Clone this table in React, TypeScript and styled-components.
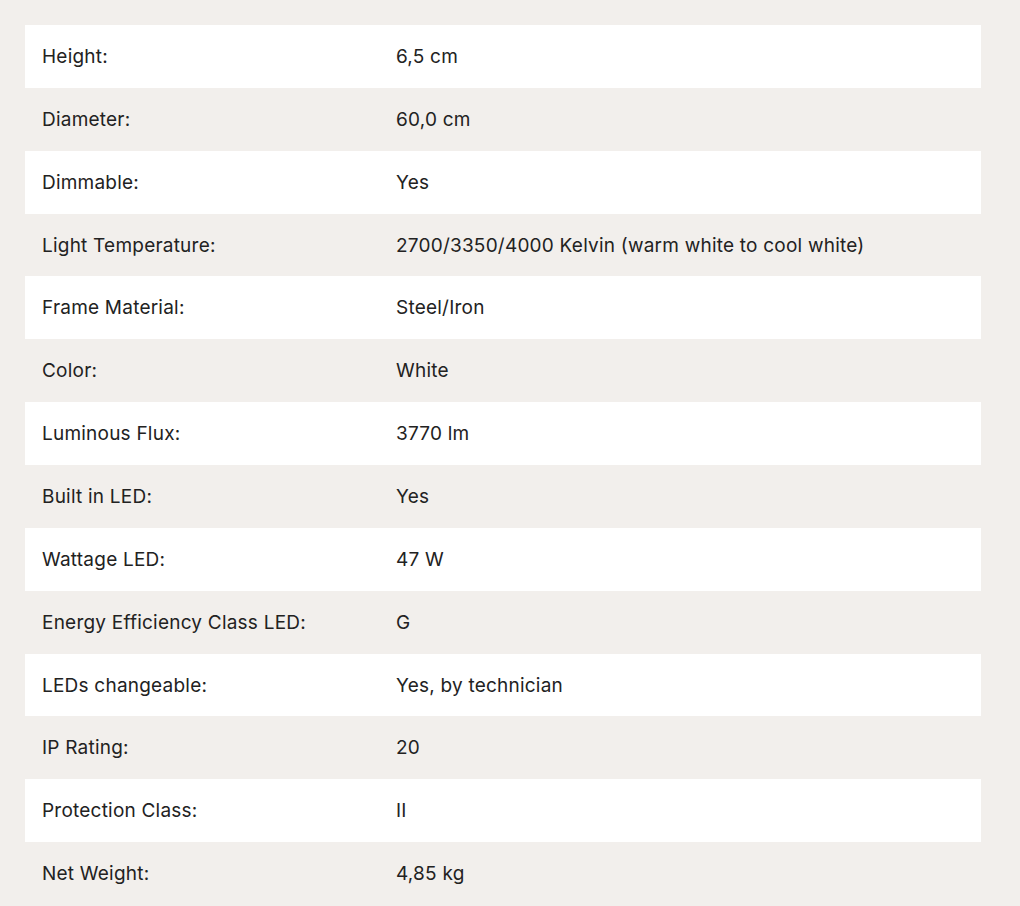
import React from "react";
import styled, { createGlobalStyle } from "styled-components";

const GlobalStyle = createGlobalStyle`
  html, body {
    margin: 0;
    padding: 0;
    background: #f2efec;
  }
  body {
    font-family: Inter, "Liberation Sans", Arial, sans-serif;
    -webkit-font-smoothing: antialiased;
  }
`;

const Page = styled.div`
  padding: 25px 39px 0 25px;
  box-sizing: border-box;
  width: 1020px;
`;

const Table = styled.div`
  display: flex;
  flex-direction: column;
  width: 956px;
`;

const Row = styled.div<{ $striped: boolean }>`
  display: grid;
  grid-template-columns: 354px 1fr;
  align-items: center;
  height: 62.86px;
  padding: 0 17px;
  box-sizing: border-box;
  background: ${(p) => (p.$striped ? "#ffffff" : "transparent")};
`;

const Label = styled.div`
  font-size: 19px;
  color: #222222;
  letter-spacing: 0.22px;
`;

const Value = styled.div`
  font-size: 19px;
  color: #222222;
  letter-spacing: 0.22px;
`;

const specs: [string, string][] = [
  ["Height:", "6,5 cm"],
  ["Diameter:", "60,0 cm"],
  ["Dimmable:", "Yes"],
  ["Light Temperature:", "2700/3350/4000 Kelvin (warm white to cool white)"],
  ["Frame Material:", "Steel/Iron"],
  ["Color:", "White"],
  ["Luminous Flux:", "3770 lm"],
  ["Built in LED:", "Yes"],
  ["Wattage LED:", "47 W"],
  ["Energy Efficiency Class LED:", "G"],
  ["LEDs changeable:", "Yes, by technician"],
  ["IP Rating:", "20"],
  ["Protection Class:", "II"],
  ["Net Weight:", "4,85 kg"],
];

export default function App() {
  return (
    <>
      <GlobalStyle />
      <Page>
        <Table>
          {specs.map(([label, value], i) => (
            <Row key={label} $striped={i % 2 === 0}>
              <Label>{label}</Label>
              <Value>{value}</Value>
            </Row>
          ))}
        </Table>
      </Page>
    </>
  );
}
